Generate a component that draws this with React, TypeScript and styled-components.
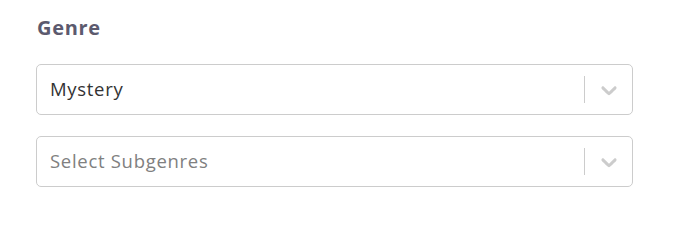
import React from "react";
import styled, { createGlobalStyle } from "styled-components";

const GlobalStyle = createGlobalStyle`
    body {
        margin: 0;
        background: #ffffff;
        font-family: "Open Sans", "Liberation Sans", sans-serif;
    }
`

type SelectProps = {
    value?: string;
    placeholder: string;
}

function ChevronDown(){
    return(
        <svg width="26" height="26" viewBox="0 0 20 20" aria-hidden="true">
            <path
                fill="currentColor"
                d="M4.516 7.548c0.436-0.446 1.043-0.481 1.576 0l3.908 3.747 3.908-3.747c0.533-0.481 1.141-0.446 1.574 0 0.436 0.445 0.408 1.197 0 1.615-0.406 0.418-4.695 4.502-4.695 4.502-0.217 0.223-0.502 0.335-0.787 0.335s-0.57-0.112-0.789-0.335c0 0-4.287-4.084-4.695-4.502s-0.436-1.17 0-1.615z"
            />
        </svg>
    )
}

function Select({ value, placeholder } : SelectProps){
    return(
        <Control>
            <ValueBox>
                {value ? <SingleValue>{value}</SingleValue> : <Placeholder>{placeholder}</Placeholder>}
            </ValueBox>
            <Indicators>
                <Separator />
                <Indicator>
                    <ChevronDown />
                </Indicator>
            </Indicators>
        </Control>
    )
}

export default function App(){
    return(
        <>
            <GlobalStyle />
            <Container>
                <Label>Genre</Label>
                <Fields>
                    <Select value="Mystery" placeholder="Select Genre" />
                    <Select placeholder="Select Subgenres" />
                </Fields>
            </Container>
        </>
    )
}

const Container = styled.div`
    width: 597px;
    padding: 14px 0 0 36px;
`
const Label = styled.div`
    font-size: 20px;
    line-height: 28px;
    font-weight: 700;
    letter-spacing: 0.7px;
    color: #5c5a6e;
    padding-left: 1px;
    margin-bottom: 22px;
`
const Fields = styled.div`
    display: flex;
    flex-direction: column;
    gap: 21px;
`
const Control = styled.div`
    box-sizing: border-box;
    height: 51px;
    display: flex;
    align-items: center;
    border: 1px solid #cccccc;
    border-radius: 5px;
    background: #ffffff;
`
const ValueBox = styled.div`
    flex: 1;
    padding: 0 13px 2px;
    font-size: 18.5px;
    letter-spacing: 0.7px;
    white-space: nowrap;
    overflow: hidden;
`
const SingleValue = styled.span`
    color: #333333;
`
const Placeholder = styled.span`
    color: #808080;
`
const Indicators = styled.div`
    display: flex;
    align-items: center;
    align-self: stretch;
`
const Separator = styled.span`
    width: 1px;
    height: 27px;
    background: #cccccc;
`
const Indicator = styled.div`
    display: flex;
    padding: 0 10px 0 11px;
    color: #cccccc;
`
